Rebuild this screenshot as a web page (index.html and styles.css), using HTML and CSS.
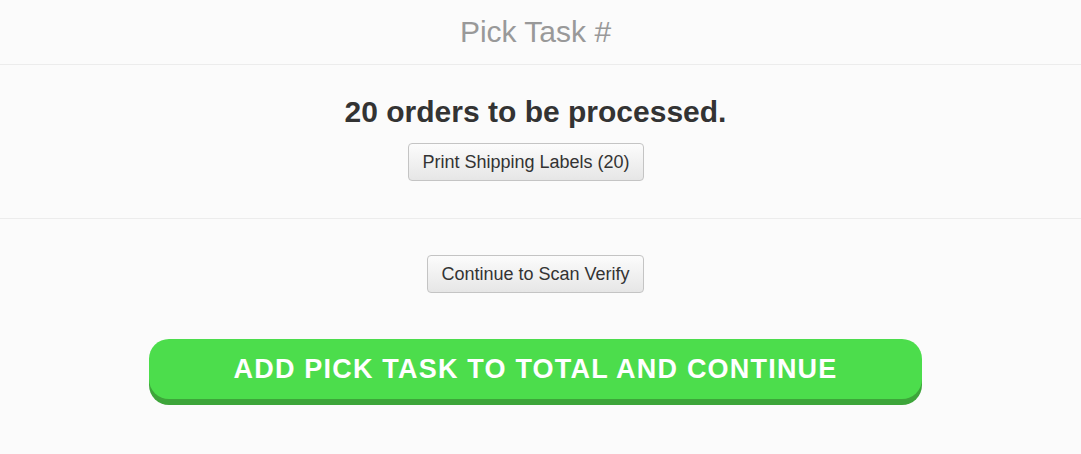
FILE: index.html
```html
<!DOCTYPE html>
<html>
<head>
<meta charset="utf-8">
<link rel="stylesheet" href="styles.css">
</head>
<body>
<div class="page">
  <header class="header">
    <h1 class="title">Pick Task #</h1>
  </header>
  <section class="orders">
    <h2 class="orders-heading">20 orders to be processed.</h2>
    <button class="btn btn-print">Print Shipping Labels (20)</button>
  </section>
  <section class="actions">
    <button class="btn">Continue to Scan Verify</button>
    <button class="big-btn">ADD PICK TASK TO TOTAL AND CONTINUE</button>
  </section>
</div>
</body>
</html>
```
FILE: styles.css
```css
html, body {
  margin: 0;
  padding: 0;
  background: #fbfbfb;
  font-family: "Liberation Sans", Arial, sans-serif;
  color: #333;
}
.page {
  width: 1081px;
  height: 454px;
  overflow: hidden;
}
.header {
  height: 64px;
  border-bottom: 1px solid #ececec;
  display: flex;
  align-items: center;
  justify-content: center;
  padding-right: 10px;
}
.title {
  margin: 0;
  font-size: 30px;
  font-weight: normal;
  color: #999;
  line-height: 34px;
}
.orders {
  display: flex;
  flex-direction: column;
  align-items: center;
  padding: 30px 10px 37px 0;
  border-bottom: 1px solid #ececec;
}
.orders-heading {
  margin: 0 0 15px;
  font-size: 30px;
  line-height: 33px;
  font-weight: bold;
  color: #333;
}
.btn {
  font-family: "Liberation Sans", Arial, sans-serif;
  font-size: 18px;
  line-height: 20px;
  color: #333;
  padding: 8px 13px;
  border: 1px solid #c4c4c4;
  border-radius: 4px;
  background: linear-gradient(#fcfcfc, #e6e6e6);
  cursor: pointer;
}
.btn-print {
  margin-right: 19px;
}
.actions {
  display: flex;
  flex-direction: column;
  align-items: center;
  padding: 36px 10px 0 0;
}
.big-btn {
  margin-top: 46px;
  width: 773px;
  height: 60px;
  border: none;
  border-radius: 20px;
  background: #4cdd4c;
  box-shadow: 0 6px 0 #3da53a;
  color: #fff;
  font-family: "Liberation Sans", Arial, sans-serif;
  font-size: 27px;
  font-weight: bold;
  letter-spacing: 1.2px;
  cursor: pointer;
}
```
